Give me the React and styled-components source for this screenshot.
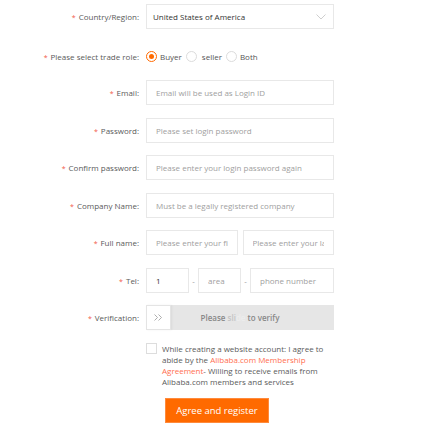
import React, { useState } from "react";
import styled, { createGlobalStyle } from "styled-components";

const GlobalStyle = createGlobalStyle`
  body {
    margin: 0;
    background: #fff;
    font-family: "Open Sans", "Liberation Sans", sans-serif;
  }
  * { box-sizing: border-box; }
`;

const roles = [
  ["buyer", "Buyer"],
  ["seller", "seller"],
  ["both", "Both"],
];

function App() {
  const [role, setRole] = useState("buyer");

  return (
    <Form>
      <GlobalStyle />
      <Row>
        <Label>Country/Region:</Label>
        <Select>
          <span>United States of America</span>
          <svg width="10" height="6" viewBox="0 0 10 6">
            <path d="M0.5 0.5 L5 5 L9.5 0.5" fill="none" stroke="#c8c8c8" strokeWidth="0.9" />
          </svg>
        </Select>
      </Row>

      <Row $height={23} $top={15.5}>
        <Label>Please select trade role:</Label>
        <RadioGroup>
          {roles.map(([key, text]) => (
            <RadioItem key={key} onClick={() => setRole(key)}>
              <Radio $checked={role === key} />
              <RadioText $wide={key === "seller"}>{text}</RadioText>
            </RadioItem>
          ))}
        </RadioGroup>
      </Row>

      <Row>
        <Label>Email:</Label>
        <Input placeholder="Email will be used as Login ID" />
      </Row>
      <Row>
        <Label>Password:</Label>
        <Input type="password" placeholder="Please set login password" />
      </Row>
      <Row>
        <Label>Confirm password:</Label>
        <Input type="password" placeholder="Please enter your login password again" />
      </Row>
      <Row>
        <Label>Company Name:</Label>
        <Input placeholder="Must be a legally registered company" />
      </Row>
      <Row>
        <Label>Full name:</Label>
        <Pair>
          <Input placeholder="Please enter your first name" />
          <Input placeholder="Please enter your last name" />
        </Pair>
      </Row>
      <Row>
        <Label>Tel:</Label>
        <TelGroup>
          <Input defaultValue="1" $width={43} />
          <Dash>-</Dash>
          <Input placeholder="area" $width={43} />
          <Dash>-</Dash>
          <Input placeholder="phone number" />
        </TelGroup>
      </Row>
      <Row>
        <Label>Verification:</Label>
        <Slider>
          <Handle>
            <svg width="9" height="7" viewBox="0 0 9 7">
              <path d="M0.5 0.5 L3.5 3.5 L0.5 6.5 M4.5 0.5 L7.5 3.5 L4.5 6.5" fill="none" stroke="#9a9a9a" strokeWidth="0.8" />
            </svg>
          </Handle>
          <SlideText>
            Please <Shine $tone="#c4c4c4">sli</Shine>
            <Shine $tone="#ededed">de</Shine> to verify
          </SlideText>
        </Slider>
      </Row>

      <Agreement>
        <CheckBox type="checkbox" />
        <AgreeBody>
          <AgreeText>
            While creating a website account: I agree to abide by the{" "}
            <AgreeLink>Alibaba.com Membership</AgreeLink> <AgreeLink>Agreement</AgreeLink>- Willing to
            receive emails from Alibaba.com members and services
          </AgreeText>
          <Submit>Agree and register</Submit>
        </AgreeBody>
      </Agreement>
    </Form>
  );
}

const Form = styled.form`
  padding-top: 4px;
  width: 428px;
`;

const Row = styled.div`
  display: grid;
  grid-template-columns: 139px 188px;
  column-gap: 7px;
  height: ${(p) => p.$height || 25}px;
  margin-top: ${(p) => p.$top || 0}px;
  margin-bottom: 12.5px;
`;

const Label = styled.label`
  display: flex;
  align-items: center;
  justify-content: flex-end;
  font-size: 8px;
  color: #5a5a5a;
  white-space: nowrap;

  &::before {
    content: "*";
    color: #f25a4a;
    font-size: 7px;
    margin-right: 3px;
    position: relative;
    top: 1px;
  }
`;

const Select = styled.div`
  display: flex;
  align-items: center;
  justify-content: space-between;
  height: 25px;
  padding: 0 7px 0 6px;
  border: 1px solid #e8e8e8;
  font-size: 8px;
  color: #333;
`;

const RadioGroup = styled.div`
  display: flex;
  align-items: center;
`;

const RadioItem = styled.div`
  display: flex;
  align-items: center;
  cursor: pointer;
`;

const Radio = styled.span`
  width: 11px;
  height: 11px;
  border-radius: 50%;
  border: 1px solid ${(p) => (p.$checked ? "#ff6a00" : "#dcdcdc")};
  background: #fff;
  position: relative;

  &::after {
    content: "";
    display: ${(p) => (p.$checked ? "block" : "none")};
    position: absolute;
    left: 2px;
    top: 2px;
    width: 5px;
    height: 5px;
    border-radius: 50%;
    background: #ff6a00;
  }
`;

const RadioText = styled.span`
  font-size: 8px;
  color: #555;
  margin: 0 4px 0 ${(p) => (p.$wide ? 5 : 3)}px;
`;

const Input = styled.input`
  width: ${(p) => (p.$width ? `${p.$width}px` : "100%")};
  flex: ${(p) => (p.$width ? "none" : "1")};
  min-width: 0;
  height: 25px;
  padding: 0 9px;
  border: 1px solid #e8e8e8;
  border-radius: 0;
  outline: none;
  font-family: inherit;
  font-size: 8px;
  color: #333;

  &::placeholder {
    color: #a0a0a0;
  }
`;

const Pair = styled.div`
  display: flex;
  gap: 5px;
`;

const TelGroup = styled.div`
  display: flex;
  align-items: center;
`;

const Dash = styled.span`
  width: 9px;
  text-align: center;
  font-size: 8px;
  color: #999;
`;

const Slider = styled.div`
  position: relative;
  display: flex;
  height: 25px;
  background: #e6e6e6;
`;

const Handle = styled.div`
  display: flex;
  align-items: center;
  justify-content: center;
  width: 25px;
  height: 25px;
  background: #fff;
  border: 1px solid #e4e4e4;
  box-shadow: 1px 0 2px rgba(0, 0, 0, 0.06);
`;

const SlideText = styled.span`
  position: absolute;
  inset: 0;
  display: flex;
  align-items: center;
  justify-content: center;
  font-size: 8px;
  font-weight: 600;
  color: #888;
  white-space: pre;
  pointer-events: none;
`;

const Shine = styled.span`
  color: ${(p) => p.$tone};
`;

const Agreement = styled.div`
  display: flex;
  gap: 5px;
  margin: 13px 0 0 146px;
`;

const CheckBox = styled.input`
  appearance: none;
  margin: 0;
  width: 11px;
  height: 11px;
  border: 1px solid #ddd;
  background: #fff;
  flex: none;
`;

const AgreeBody = styled.div`
  display: flex;
  flex-direction: column;
`;

const AgreeText = styled.p`
  margin: 0;
  width: 166px;
  font-size: 8px;
  line-height: 11px;
  color: #5a5a5a;
`;

const AgreeLink = styled.a`
  display: inline-block;
  line-height: 11px;
  color: #ff6f4f;
  text-decoration: none;
`;

const Submit = styled.button`
  margin: 11px 0 0 3px;
  width: 104px;
  height: 25px;
  border: 1px solid #ff8a3c;
  background: #ff6a00;
  color: #fff;
  font-family: inherit;
  font-size: 9.5px;
  cursor: pointer;
`;

export default App;
